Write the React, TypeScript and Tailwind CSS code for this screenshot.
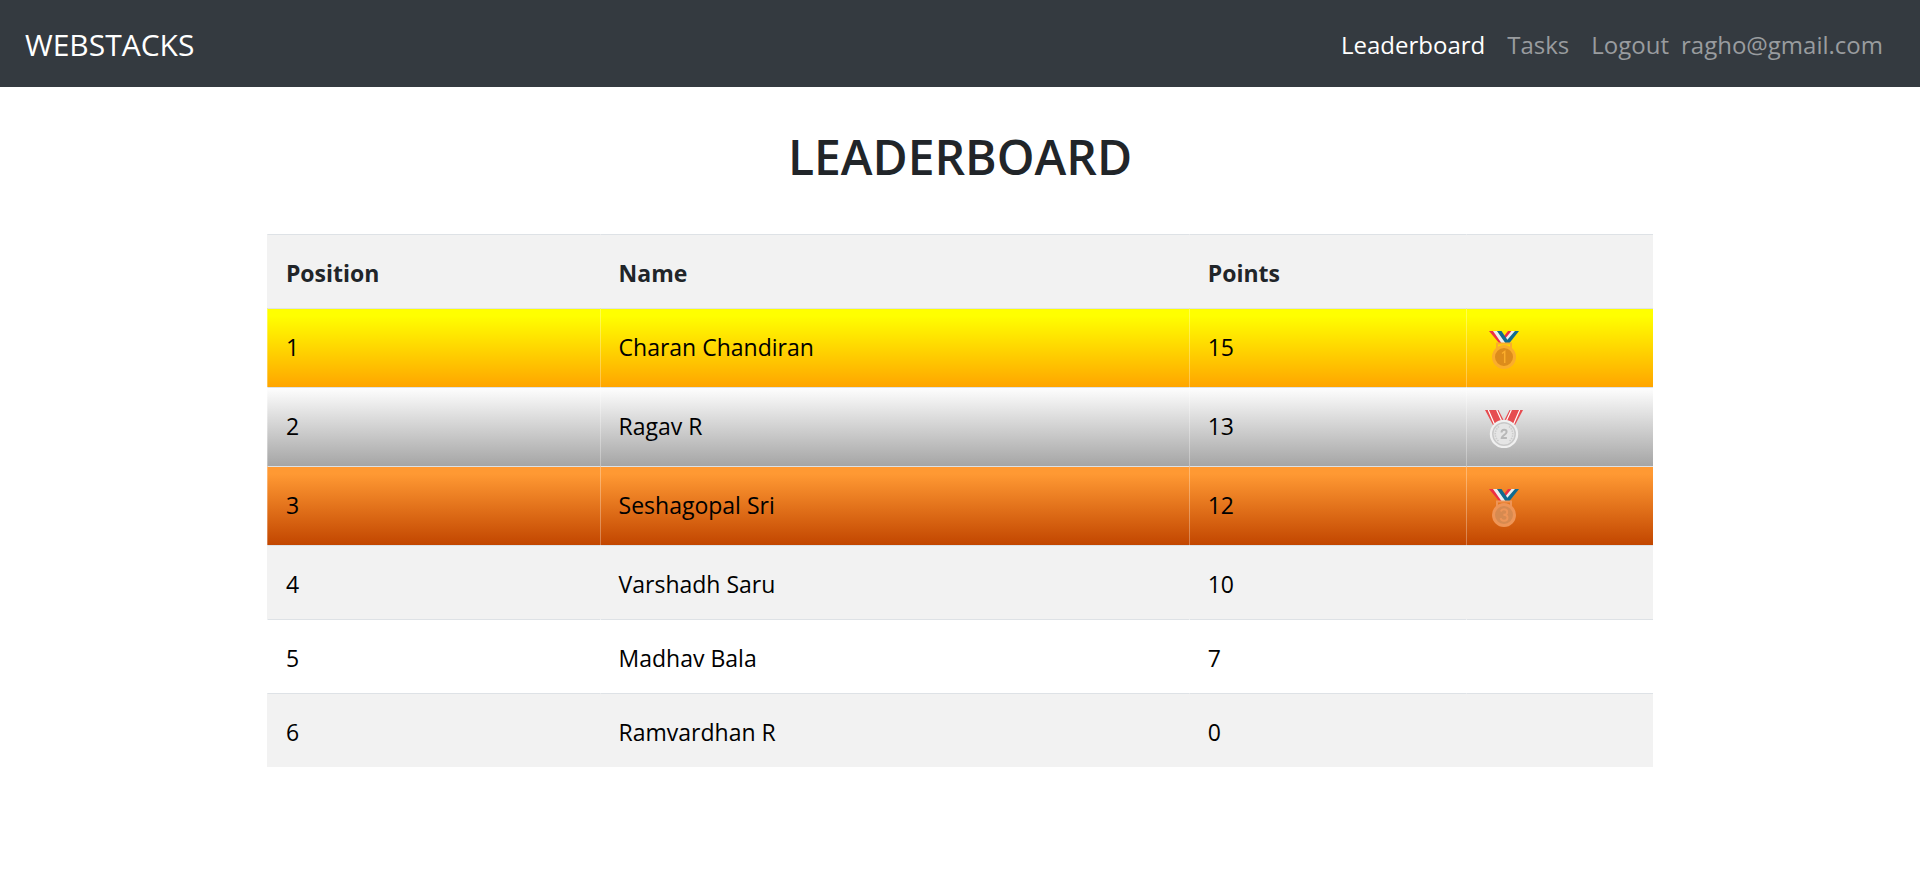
type Rank = 1 | 2 | 3;

interface Player {
  position: number;
  name: string;
  points: number;
}

const players: Player[] = [
  { position: 1, name: "Charan Chandiran", points: 15 },
  { position: 2, name: "Ragav R", points: 13 },
  { position: 3, name: "Seshagopal Sri", points: 12 },
  { position: 4, name: "Varshadh Saru", points: 10 },
  { position: 5, name: "Madhav Bala", points: 7 },
  { position: 6, name: "Ramvardhan R", points: 0 },
];

const rowStyles: Record<number, string> = {
  1: "bg-[linear-gradient(to_bottom,#ffff00_10%,#ffa500)]",
  2: "bg-[linear-gradient(to_bottom,#ffffff,#a5a5a5)]",
  3: "bg-[linear-gradient(to_bottom,#ff9933_10%,#c24600)]",
  4: "bg-[#f2f2f2]",
  5: "bg-white",
  6: "bg-[#f2f2f2]",
};

/* Tricolour ribbon with a round medal, used for first and third place */
function RibbonMedal({ rank, rim, face, label }: { rank: Rank; rim: string; face: string; label: string }) {
  return (
    <svg className="block size-[38px]" viewBox="0 0 38 38" role="img" aria-label={label}>
      <path d="M23 0h4L20 9l-2-2.500z" fill="#ec2f45" />
      <path d="M26.500 0h4L21.500 11l-2-2.500z" fill="#eeeeee" />
      <path d="M30 0h4L24.500 12h-5z" fill="#106b91" />
      <path d="M4 0h4.500l9 12H14z" fill="#ec2f45" />
      <path d="M8 0h4.200l9 12h-4.800z" fill="#eeeeee" />
      <path d="M12 0h4.500l8 12h-4.200z" fill="#106b91" />
      <path d="M12 12.500h14v6H12z" fill="none" stroke={rim} strokeWidth="2" />
      <circle cx="19" cy="26" r="10.500" fill={face} stroke={rim} strokeWidth="3" />
      {rank === 1 ? (
        <path d="M17 22.500l2.700-2v11.500" fill="none" stroke={rim} strokeWidth="1.500" />
      ) : (
        <path
          d="M16 22.400c.4-1.500 1.500-2.200 3-2.200 1.900 0 3.200 1 3.200 2.700 0 1.800-1.400 2.800-3.800 2.800 2.600 0 4.100 1 4.100 3 0 1.900-1.400 3-3.500 3-1.900 0-3.100-.9-3.400-2.600"
          fill="none"
          stroke={rim}
          strokeWidth="1.900"
        />
      )}
    </svg>
  );
}

/* Silver medal hanging on two red striped straps */
function SilverMedal() {
  return (
    <svg className="block size-[38px]" viewBox="0 0 38 38" role="img" aria-label="Silver medal">
      <path d="M0 0h13.500l6 12-11 4z" fill="#e64c50" />
      <path d="M38 0H24.500l-6 12 11 4z" fill="#e64c50" />
      <path d="M3.300 0l6.500 15M11.700 0l5.500 12M34.700 0l-6.500 15M26.300 0l-5.500 12" stroke="#ffffff" strokeWidth="1.200" />
      <circle cx="19" cy="24" r="14.200" fill="#f0f0f0" />
      <circle cx="19" cy="24" r="11.200" fill="#e5e5e5" stroke="#c9c9c9" strokeWidth="1.500" />
      <path d="M14 16.500c-5 4-5 11 0 15M24 16.500c5 4 5 11 0 15" fill="none" stroke="#cccccc" strokeWidth="1.600" strokeDasharray="1.500 1" />
      <path d="M16.500 22.500c.1-1.800 1-2.700 2.600-2.700s2.500.9 2.500 2.200c0 2.400-4.700 3.500-4.900 5.900h5.200" fill="none" stroke="#b8b8b8" strokeWidth="2" />
    </svg>
  );
}

function Medal({ position }: { position: number }) {
  if (position === 1) return <RibbonMedal rank={1} rim="#fbad2b" face="#dd8c1b" label="Gold medal" />;
  if (position === 2) return <SilverMedal />;
  if (position === 3) return <RibbonMedal rank={3} rim="#ee9557" face="#d68a50" label="Bronze medal" />;
  return null;
}

function PlayerRow({ player }: { player: Player }) {
  const podium = player.position <= 3;
  const edge = podium ? "border-l border-l-white/30" : "border-l border-l-transparent";
  const cell = `border-t border-t-[#dee2e6] px-[18px] pt-5 pb-4 align-top ${edge}`;
  return (
    <tr className={rowStyles[player.position]}>
      <td className={cell}>{player.position}</td>
      <td className={cell}>{player.name}</td>
      <td className={cell}>{player.points}</td>
      <td className={`border-t border-t-[#dee2e6] px-[18px] align-top ${edge} ${podium ? "pt-[22px] pb-[18px]" : "py-[18px]"}`}>
        <Medal position={player.position} />
      </td>
    </tr>
  );
}

export default function App() {
  const head = "border-t border-t-[#dee2e6] border-l border-l-transparent px-[18px] pt-5 pb-4 font-bold";
  return (
    <div className="min-h-screen bg-white font-['Open_Sans','Noto_Sans',sans-serif] text-[#212529]">
      <nav className="flex h-[87px] items-center justify-between bg-[#343a40] pl-[25px] pr-[37px] pt-0.5">
        <a href="#home" className="text-[30px] leading-[45px] text-white">
          WEBSTACKS
        </a>
        <div className="flex items-center text-2xl leading-9 text-[#999c9f]">
          <a href="#leaderboard" className="mr-[22px] text-white">
            Leaderboard
          </a>
          <a href="#tasks" className="mr-[22px]">
            Tasks
          </a>
          <a href="#logout" className="mr-3">
            Logout
          </a>
          <span>ragho@gmail.com</span>
        </div>
      </nav>
      <main className="pb-12">
        <h1 className="pt-10 text-center text-5xl font-semibold leading-[60px]">LEADERBOARD</h1>
        <table className="mx-auto mt-[47px] w-[72.2%] table-fixed border-separate border-spacing-0 text-left text-[23px] leading-[37px]">
          <colgroup>
            <col className="w-[24%]" />
            <col className="w-[42.5%]" />
            <col className="w-[20%]" />
            <col className="w-[13.5%]" />
          </colgroup>
          <thead>
            <tr className="bg-[#f2f2f2]">
              <th scope="col" className={head}>Position</th>
              <th scope="col" className={head}>Name</th>
              <th scope="col" className={head}>Points</th>
              <td className={head}></td>
            </tr>
          </thead>
          <tbody className="text-black">
            {players.map((player) => (
              <PlayerRow key={player.position} player={player} />
            ))}
          </tbody>
        </table>
      </main>
    </div>
  );
}
